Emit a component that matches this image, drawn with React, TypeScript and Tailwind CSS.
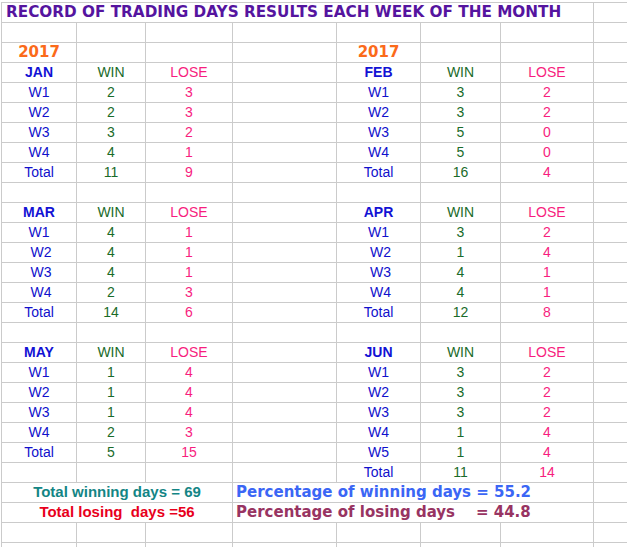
import React from "react";

type C = { t?: string; c?: string; span?: number; left?: boolean };

const ARIAL = "font-['Liberation_Sans',Arial,sans-serif] text-[14px]";
const VERD = "font-['DejaVu_Sans',Verdana,sans-serif] font-bold text-[15px]";
const TAHOMA = "font-['Liberation_Sans',Arial,sans-serif] font-bold text-[15px]";

const TITLE = "font-['DejaVu_Sans',Verdana,sans-serif] font-bold text-[15.25px] text-[#55149f] pl-[4px]";
const YEAR = `${VERD} text-[#fb6a1a]`;
const MON = `${ARIAL} font-bold text-[#1212d4]`;
const LAB = `${ARIAL} text-[#1010cc]`;
const GRN = `${ARIAL} text-[#1a6b2a]`;
const PNK = `${ARIAL} text-[#f71e7e]`;

const E: C = {};
const mon = (t: string): C => ({ t, c: MON });
const lab = (t: string): C => ({ t, c: LAB });
const g = (t: string): C => ({ t, c: GRN });
const p = (t: string): C => ({ t, c: PNK });
const HW: C = { t: "WIN", c: GRN };
const HL: C = { t: "LOSE", c: PNK };
const blank: C[] = [E, E, E, E, E, E, E, E];

const wk = (l: string, lw: string, ll: string, r: string, rw: string, rl: string): C[] => [
  lab(l), g(lw), p(ll), E, lab(r), g(rw), p(rl), E,
];

const rows: C[][] = [
  [{ t: "RECORD OF TRADING DAYS RESULTS EACH WEEK OF THE MONTH", c: TITLE, span: 7, left: true }, E],
  blank,
  [{ t: "2017", c: YEAR }, E, E, E, { t: "2017", c: YEAR }, E, E, E],
  [mon("JAN"), HW, HL, E, mon("FEB"), HW, HL, E],
  wk("W1", "2", "3", "W1", "3", "2"),
  wk("W2", "2", "3", "W2", "3", "2"),
  wk("W3", "3", "2", "W3", "5", "0"),
  wk("W4", "4", "1", "W4", "5", "0"),
  wk("Total", "11", "9", "Total", "16", "4"),
  blank,
  [mon("MAR"), HW, HL, E, mon("APR"), HW, HL, E],
  wk("W1", "4", "1", "W1", "3", "2"),
  wk(" W2", "4", "1", " W2", "1", "4"),
  wk(" W3", "4", "1", " W3", "4", "1"),
  wk(" W4", "2", "3", " W4", "4", "1"),
  wk("Total", "14", "6", "Total", "12", "8"),
  blank,
  [mon("MAY"), HW, HL, E, mon("JUN"), HW, HL, E],
  wk("W1", "1", "4", "W1", "3", "2"),
  wk("W2", "1", "4", "W2", "3", "2"),
  wk("W3", "1", "4", "W3", "3", "2"),
  wk("W4", "2", "3", "W4", "1", "4"),
  wk("Total", "5", "15", "W5", "1", "4"),
  [E, E, E, E, lab("Total"), g("11"), p("14"), E],
  [
    { t: "Total winning days = 69", c: `${TAHOMA} text-[#138585]`, span: 3 },
    { t: "Percentage of winning days = 55.2", c: `${VERD} text-[#3b66f5] pl-[3px]`, span: 4, left: true },
    E,
  ],
  [
    { t: "Total losing  days =56", c: `${TAHOMA} text-[#e8001c]`, span: 3 },
    { t: "Percentage of losing days    = 44.8", c: `${VERD} text-[#983462] pl-[3px]`, span: 4, left: true },
    E,
  ],
  blank,
  blank,
];

const spanCls: Record<number, string> = { 1: "", 3: "col-span-3", 4: "col-span-4", 7: "col-span-7" };

export default function App() {
  const cells: React.ReactNode[] = [];
  rows.forEach((row, ri) => {
    let col = 0;
    row.forEach((cell, ci) => {
      const span = cell.span ?? 1;
      col += span;
      const last = col === 8;
      cells.push(
        <div
          key={`${ri}-${ci}`}
          className={[
            "h-[20px] border-b border-[#cbcbcb] flex items-center whitespace-pre overflow-visible",
            last ? "" : "border-r",
            spanCls[span],
            cell.left ? "justify-start" : "justify-center",
            cell.c ?? "",
          ].join(" ")}
        >
          {cell.t ?? ""}
        </div>
      );
    });
  });

  return (
    <div className="w-[627px] h-[547px] overflow-hidden bg-white">
      <div className="ml-[1px] mt-[2px] border-l border-t border-[#cbcbcb] grid grid-cols-[75px_69px_87px_104px_84px_80px_93px_33px]">
        {cells}
      </div>
    </div>
  );
}
